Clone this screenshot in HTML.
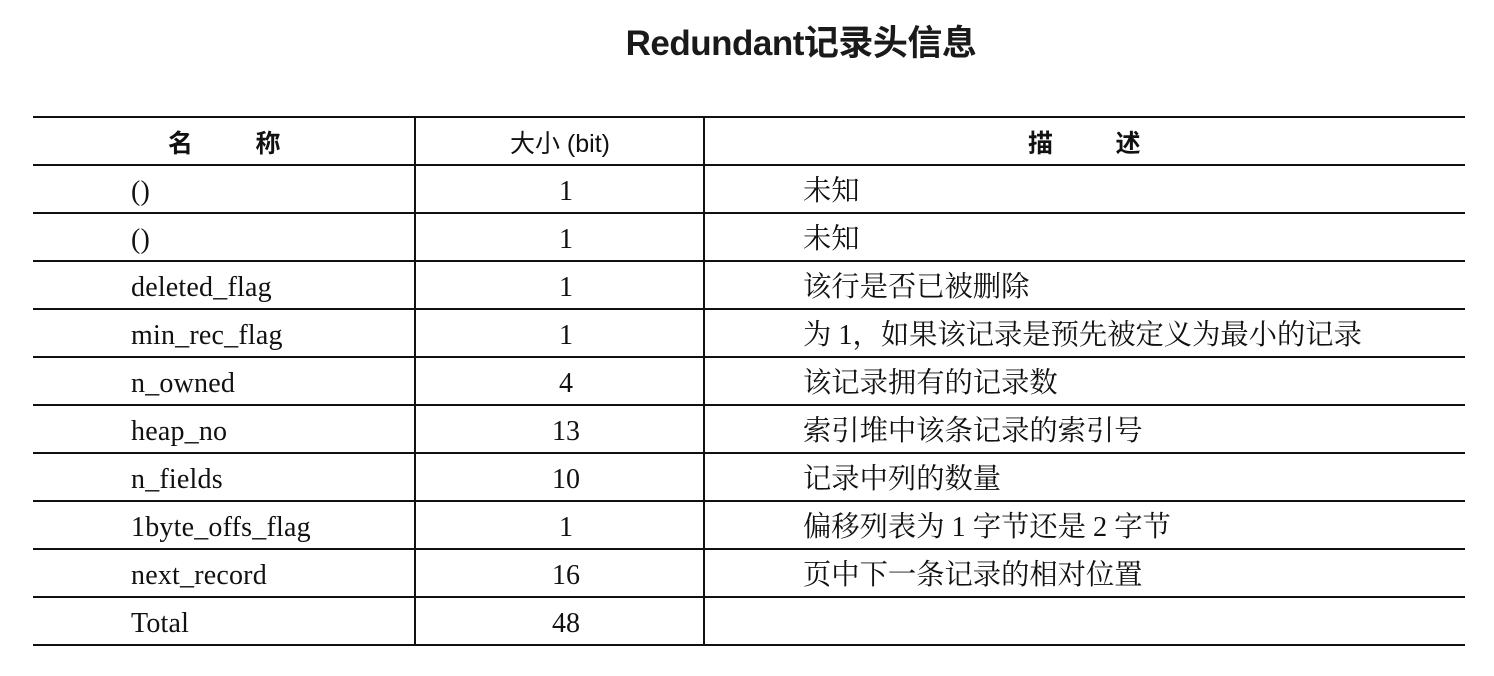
<!DOCTYPE html>
<html><head><meta charset="utf-8"><style>
body{margin:0;background:#fff;width:1494px;height:676px;position:relative;overflow:hidden;font-family:"Liberation Serif","Noto Serif CJK SC",serif;color:#111}
.t{position:absolute;left:0;width:1494px;top:15px;text-align:center;font:bold 35px "Liberation Sans","Noto Sans CJK SC",sans-serif;color:#1a1a1a;padding-left:108px;box-sizing:border-box;letter-spacing:-0.5px}
.h{position:absolute;left:33px;width:1432px;background:#111}
.v{position:absolute;width:2px;background:#111;top:117px;height:529px}
.c{position:absolute;font-size:28px;line-height:48px;height:48px;white-space:nowrap;padding-top:2px}
.hd{font-family:"Liberation Sans","Noto Sans CJK SC",sans-serif;font-size:25px;font-weight:bold;padding-top:2px}
.n{left:131px;letter-spacing:0.2px}.s{left:415px;width:290px;text-align:center;padding-left:12px;box-sizing:border-box}.d{left:803px;font-size:28.3px}
</style></head><body>
<div class="t">Redundant记录头信息</div>
<div class="h" style="top:116px;height:2px"></div>
<div class="h" style="top:164px;height:2px"></div>
<div class="h" style="top:212px;height:2px"></div>
<div class="h" style="top:260px;height:2px"></div>
<div class="h" style="top:308px;height:2px"></div>
<div class="h" style="top:356px;height:2px"></div>
<div class="h" style="top:404px;height:2px"></div>
<div class="h" style="top:452px;height:2px"></div>
<div class="h" style="top:500px;height:2px"></div>
<div class="h" style="top:548px;height:2px"></div>
<div class="h" style="top:596px;height:2px"></div>
<div class="h" style="top:644px;height:2px"></div>
<div class="v" style="left:414px"></div>
<div class="v" style="left:703px"></div>

<div class="c hd" style="top:118px;left:168px">名&nbsp;&nbsp;&nbsp;&nbsp;&nbsp;&nbsp;&nbsp;&nbsp;&nbsp;称</div>
<div class="c hd s" style="top:118px;padding-left:0;font-weight:normal">大小 (bit)</div>
<div class="c hd" style="top:118px;left:1028px">描&nbsp;&nbsp;&nbsp;&nbsp;&nbsp;&nbsp;&nbsp;&nbsp;&nbsp;述</div>

<div class="c n" style="top:166px">()</div><div class="c s" style="top:166px">1</div><div class="c d" style="top:166px">未知</div>
<div class="c n" style="top:214px">()</div><div class="c s" style="top:214px">1</div><div class="c d" style="top:214px">未知</div>
<div class="c n" style="top:262px">deleted_flag</div><div class="c s" style="top:262px">1</div><div class="c d" style="top:262px">该行是否已被删除</div>
<div class="c n" style="top:310px">min_rec_flag</div><div class="c s" style="top:310px">1</div><div class="c d" style="top:310px">为 1，如果该记录是预先被定义为最小的记录</div>
<div class="c n" style="top:358px">n_owned</div><div class="c s" style="top:358px">4</div><div class="c d" style="top:358px">该记录拥有的记录数</div>
<div class="c n" style="top:406px">heap_no</div><div class="c s" style="top:406px">13</div><div class="c d" style="top:406px">索引堆中该条记录的索引号</div>
<div class="c n" style="top:454px">n_fields</div><div class="c s" style="top:454px">10</div><div class="c d" style="top:454px">记录中列的数量</div>
<div class="c n" style="top:502px">1byte_offs_flag</div><div class="c s" style="top:502px">1</div><div class="c d" style="top:502px">偏移列表为 1 字节还是 2 字节</div>
<div class="c n" style="top:550px">next_record</div><div class="c s" style="top:550px">16</div><div class="c d" style="top:550px">页中下一条记录的相对位置</div>
<div class="c n" style="top:598px">Total</div><div class="c s" style="top:598px">48</div>
</body></html>
